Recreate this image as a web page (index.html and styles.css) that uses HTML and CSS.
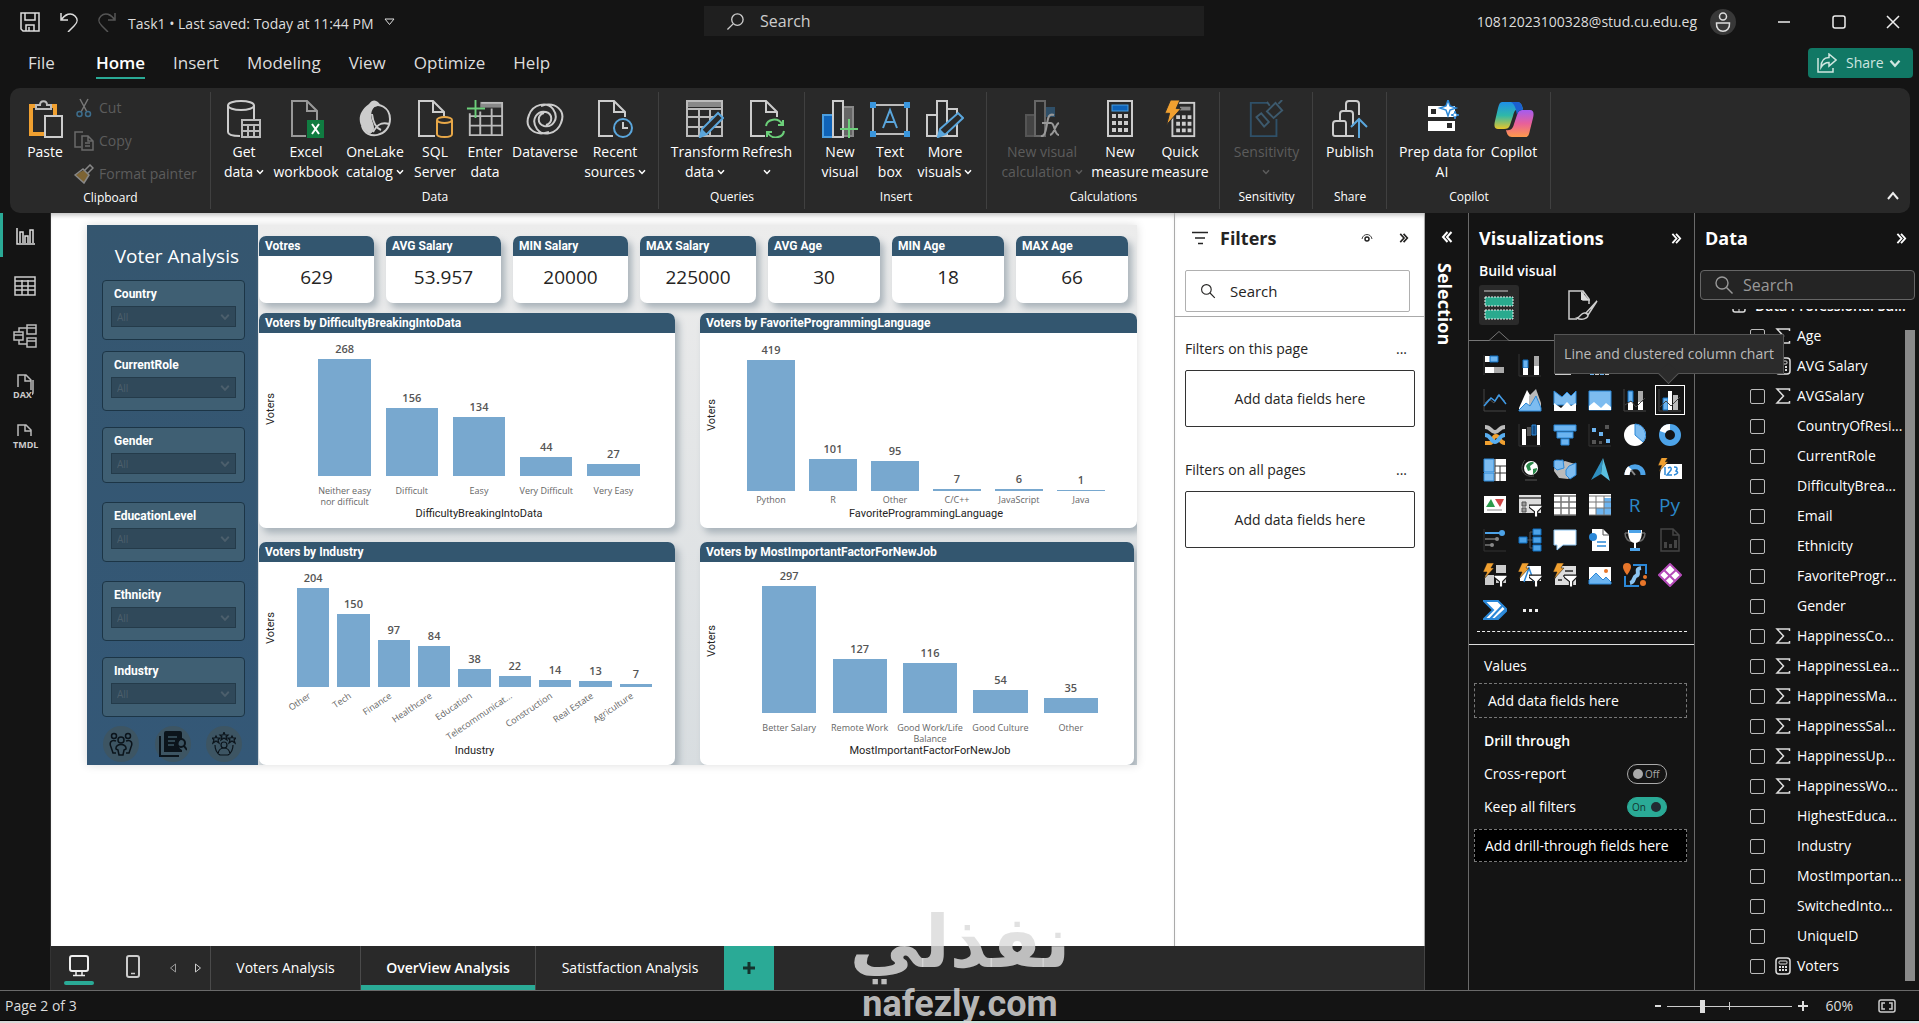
FILE: index.html
```html
<!DOCTYPE html>
<html lang="en">
<head>
<meta charset="utf-8">
<title>Task1 - Power BI Desktop</title>
<link rel="stylesheet" href="styles.css">
</head>
<body>
<svg class="defs" aria-hidden="true">
  <symbol id="chev" viewBox="0 0 8 6"><path d="M1 1.200 4 4.500 7 1.200" fill="none" stroke="currentColor" stroke-width="1.500"/></symbol>
  <symbol id="dbl" viewBox="0 0 12 12"><path d="M1.500 1 6 6l-4.500 5M5.500 1 10 6l-4.500 5" fill="none" stroke="currentColor" stroke-width="2"/></symbol>
  <symbol id="sum" viewBox="0 0 16 18"><path d="M14.500 4V2H2l6.500 7L2 16h12.500v-2" fill="none" stroke="#ddd" stroke-width="1.500"/></symbol>
  <symbol id="calc" viewBox="0 0 16 18"><rect x="1" y="1" width="14" height="16" rx="3" fill="none" stroke="#ddd" stroke-width="1.500"/><rect x="4" y="4" width="8" height="3" rx="1" fill="none" stroke="#ddd"/><path d="M4 10h2m1 0h2m1 0h2M4 13h2m1 0h2m1 0h2" stroke="#ddd" stroke-width="2"/></symbol>
  <symbol id="bolt" viewBox="0 0 12 16"><path d="M4 0h7L8 5h3L1 16l3-7H0z" fill="#f0a030" stroke="#141414" stroke-width=".5"/></symbol>
  <symbol id="funnel" viewBox="0 0 12 12"><path d="M0 1h12v2L8 7v5H5V7L0 3z" fill="#fff" stroke="#141414"/></symbol>
  <symbol id="lens" viewBox="0 0 20 20"><circle cx="8" cy="8" r="6" fill="none" stroke="currentColor" stroke-width="1.400"/><path d="m12.500 12.500 6 6" stroke="currentColor" stroke-width="1.400"/></symbol>
</svg>

<header class="titlebar">
  <div class="quick">
    <button class="icon-btn" aria-label="Save"><svg width="20" height="20" viewBox="0 0 20 20"><path d="M1 1h18v18H3l-2-2zM5 1v7h10V1M6 19v-6h8v6M9 15v4" fill="none" stroke="#ddd" stroke-width="1.500"/></svg></button>
    <button class="icon-btn" aria-label="Undo"><svg width="18" height="20" viewBox="0 0 18 20"><path d="M1 1v7h7M1 8C5 2 11 0 15 4s2 7-1 10l-6 6" fill="none" stroke="#ddd" stroke-width="1.500"/></svg></button>
    <button class="icon-btn" aria-label="Redo"><svg width="18" height="20" viewBox="0 0 18 20"><path d="M17 1v7h-7M17 8C13 2 7 0 3 4s-2 7 1 10l6 6" fill="none" stroke="#555" stroke-width="1.500"/></svg></button>
    <span class="doc">Task1 • Last saved: Today at 11:44 PM</span>
    <svg width="11" height="8" viewBox="0 0 11 8"><path d="M1 1h9L5.500 6.500z" fill="none" stroke="#ddd"/></svg>
  </div>
  <label class="top-search"><svg class="flip" width="19" height="19"><use href="#lens"/></svg><input type="text" placeholder="Search" aria-label="Search"></label>
  <div class="account">
    <span>10812023100328@stud.cu.edu.eg</span>
    <svg width="26" height="26" viewBox="0 0 26 26"><circle cx="13" cy="13" r="13" fill="#383838"/><circle cx="13" cy="7.500" r="3.500" fill="none" stroke="#ddd" stroke-width="1.500"/><path d="M6.500 14h13c1 11-14 11-13 0z" fill="none" stroke="#ddd" stroke-width="1.500"/></svg>
    <button class="win" aria-label="Minimize"><svg width="14" height="14" viewBox="0 0 14 14"><path d="M1 7h12" stroke="#eee" stroke-width="1.500"/></svg></button>
    <button class="win" aria-label="Maximize"><svg width="14" height="14" viewBox="0 0 14 14"><rect x="1" y="1" width="12" height="12" rx="2" fill="none" stroke="#eee" stroke-width="1.500"/></svg></button>
    <button class="win" aria-label="Close"><svg width="14" height="14" viewBox="0 0 14 14"><path d="m1 1 12 12M13 1 1 13" stroke="#eee" stroke-width="1.500"/></svg></button>
  </div>
</header>

<nav class="menu">
  <button class="m-file">File</button><button class="on">Home</button><button>Insert</button><button>Modeling</button><button>View</button><button>Optimize</button><button>Help</button>
  <button class="share"><svg width="20" height="20" viewBox="0 0 20 20"><path d="M1 5v14h15v-4M12 1l7 6-7 6V9.500c-4 0-6 1.500-8 5C4 8 7 4.500 12 4.500z" fill="none" stroke="#cfe6e0" stroke-width="1.500"/></svg>Share<svg width="12" height="9"><use href="#chev"/></svg></button>
</nav>

<section class="ribbon">
  <div class="group g-clip">
    <div class="cmds">
      <button class="cmd w-paste"><svg width="36" height="38" viewBox="0 0 36 38"><path d="M4 6h24v28H4z" fill="none" stroke="#f0a030" stroke-width="4"/><path d="M9 9V5h4c0-5 7-5 7 0h4v4z" fill="#2a2a2a" stroke="#bbb" stroke-width="2"/><path d="M18 16h17v21H18z" fill="#2a2a2a" stroke="#ccc" stroke-width="2"/></svg>Paste</button>
      <div class="small-cmds">
        <button><svg width="20" height="20" viewBox="0 0 20 20"><path d="M6 1l7 13M14 1 7 14" stroke="#777" stroke-width="1.500"/><circle cx="5.500" cy="16" r="2.500" fill="none" stroke="#3d6d8c" stroke-width="1.500"/><circle cx="14" cy="16" r="2.500" fill="none" stroke="#3d6d8c" stroke-width="1.500"/></svg>Cut</button>
        <button><svg width="20" height="20" viewBox="0 0 20 20"><path d="M7 16H1V1h8M8 5h6l5 5v9H8zM14 5v5h5M11 12h5M11 15h5" fill="none" stroke="#6a6a6a" stroke-width="1.500"/></svg>Copy</button>
        <button><svg width="20" height="20" viewBox="0 0 20 20"><path d="M1 11l9-5 5 5-5 8z" fill="#7d6434"/><path d="M1 11 9 5l6 6-5 8zM11 6l5-5 3 3-5 5" fill="none" stroke="#888" stroke-width="1.500"/></svg>Format painter</button>
      </div>
    </div>
    <span class="g-name">Clipboard</span>
  </div>
  <div class="group g-data">
    <div class="cmds">
      <button class="cmd w-a"><svg width="36" height="38" viewBox="0 0 36 38"><path d="M2 5v27c0 3 5 4 12 4M28 5v14" fill="none" stroke="#ccc" stroke-width="2"/><ellipse cx="15" cy="5.500" rx="13" ry="4.500" fill="none" stroke="#ccc" stroke-width="2"/><path d="M16 20h18v17H16zM16 25h18M16 31h18M22 25v12M28 25v12" fill="none" stroke="#bbb" stroke-width="2"/></svg>Get<span>data<svg class="ch"><use href="#chev"/></svg></span></button>
      <button class="cmd w-b"><svg width="36" height="38" viewBox="0 0 36 38"><path d="M18 36H4V1h15l10 10v9M19 1v10h10" fill="none" stroke="#999" stroke-width="2"/><rect x="19" y="20" width="17" height="18" fill="#107c41"/><path d="m24 24 7 10m0-10-7 10" stroke="#fff" stroke-width="2"/></svg>Excel<span>workbook</span></button>
      <button class="cmd w-c"><svg width="36" height="38" viewBox="0 0 36 38"><path d="M12 4c4-6 9-4 12 2-9-2-12 8-8 17 2 6 1 9-3 11C1 28-2 14 12 4z" fill="#ccc"/><path d="M14 8c8-7 19 0 19 11 0 18-24 22-28 7M15 14c1 8 4 14 9 16M16 32c5-9 10-10 16-8" fill="none" stroke="#ccc" stroke-width="2"/></svg>OneLake<span>catalog <svg class="ch"><use href="#chev"/></svg></span></button>
      <button class="cmd w-d"><svg width="36" height="38" viewBox="0 0 36 38"><path d="M18 36H2V1h14l11 11v4M16 1v11h11" fill="none" stroke="#ccc" stroke-width="2"/><path d="M20 20v14c0 4 15 4 15 0V20" fill="none" stroke="#e8a848" stroke-width="2"/><ellipse cx="27.500" cy="20" rx="7.500" ry="3" fill="#2a2a2a" stroke="#e8a848" stroke-width="2"/></svg>SQL<span>Server</span></button>
      <button class="cmd w-e"><svg width="38" height="40" viewBox="0 0 38 40"><path d="M14 5h23" stroke="#888" stroke-width="6"/><path d="M3 14v23h34V3H15M3 17h34M3 27h34M14 12v25M26 9v28" fill="none" stroke="#bbb" stroke-width="2"/><path d="M9 0v19M0 9h19" stroke="#6ccf7a" stroke-width="2"/></svg>Enter<span>data</span></button>
      <button class="cmd w-f"><svg width="38" height="38" viewBox="0 0 38 38"><path d="M23 32C8 37-2 27 3 15 7 4 21 1 27 9c7 10-1 19-9 17-7-2-7-11 0-13M15 6c15-5 25 5 20 17-4 11-18 14-24 6-7-10 1-19 9-17 7 2 7 11 0 13" fill="none" stroke="#ccc" stroke-width="2"/></svg>Dataverse</button>
      <button class="cmd w-g"><svg width="36" height="38" viewBox="0 0 36 38"><path d="M16 36H2V1h15l11 11v5M17 1v11h11" fill="none" stroke="#ccc" stroke-width="2"/><circle cx="26" cy="28" r="9" fill="#2a2a2a" stroke="#5aa6dc" stroke-width="2"/><path d="M26 22v6h5" fill="none" stroke="#ccc" stroke-width="2"/></svg>Recent<span>sources<svg class="ch"><use href="#chev"/></svg></span></button>
    </div>
    <span class="g-name">Data</span>
  </div>
  <div class="group g-query">
    <div class="cmds">
      <button class="cmd w-g"><svg width="38" height="38" viewBox="0 0 38 38"><path d="M1 4h35" stroke="#888" stroke-width="6"/><path d="M1 1h35v35H1zM1 9h35M1 17h35M1 27h35M13 9v27M24 9v27" fill="none" stroke="#bbb" stroke-width="2"/><path d="M14 37l2-8 16-16 5 5-16 16z" fill="#2a2a2a" stroke="#5aa6dc" stroke-width="2"/><path d="m14 37 2-8 5 5z" fill="#5aa6dc"/></svg>Transform<span>data <svg class="ch"><use href="#chev"/></svg></span></button>
      <button class="cmd w-e"><svg width="36" height="38" viewBox="0 0 36 38"><path d="M16 36H2V1h15l11 11v5M17 1v11h11" fill="none" stroke="#ccc" stroke-width="2"/><path d="M17 26c1-7 12-9 16-2M34 20v5h-5M35 31c-1 7-12 9-16 2M18 37v-5h5" fill="none" stroke="#6ccf7a" stroke-width="2"/></svg>Refresh<span><svg class="ch"><use href="#chev"/></svg></span></button>
    </div>
    <span class="g-name">Queries</span>
  </div>
  <div class="group g-insert">
    <div class="cmds">
      <button class="cmd w-d"><svg width="36" height="38" viewBox="0 0 36 38"><rect x="1" y="15" width="10" height="22" fill="#0f63b8" stroke="#4a9ee0" stroke-width="2"/><rect x="21" y="7" width="10" height="29" fill="#666" stroke="#888" stroke-width="2"/><rect x="11" y="1" width="10" height="36" fill="#2a2a2a" stroke="#ccc" stroke-width="2"/><path d="M27 19v19M18 29h18" stroke="#6ccf7a" stroke-width="2"/></svg>New<span>visual</span></button>
      <button class="cmd w-e"><svg width="40" height="38" viewBox="0 0 40 38"><rect x="3" y="5" width="34" height="29" fill="none" stroke="#bbb" stroke-width="2"/><path d="M0 2h6v6H0zM34 2h6v6h-6zM0 31h6v6H0zM34 31h6v6h-6z" fill="#3a96dd"/><path d="m13 28 7-18 7 18M15 22h10" fill="none" stroke="#5aa6dc" stroke-width="2"/></svg>Text<span>box</span></button>
      <button class="cmd w-h"><svg width="38" height="38" viewBox="0 0 38 38"><path d="M1 15h10v21H1zM11 1h10v35H11zM21 9h10v27H21z" fill="none" stroke="#ccc" stroke-width="2"/><path d="M12 37l2-8 18-16 5 5-17 16z" fill="#2a2a2a" stroke="#5aa6dc" stroke-width="2"/><path d="m12 37 2-8 5 5z" fill="#5aa6dc"/></svg>More<span>visuals <svg class="ch"><use href="#chev"/></svg></span></button>
    </div>
    <span class="g-name">Insert</span>
  </div>
  <div class="group g-calc">
    <div class="cmds">
      <button class="cmd w-i off" disabled><svg width="36" height="38" viewBox="0 0 36 38"><rect x="2" y="15" width="9" height="21" fill="#444" stroke="#555" stroke-width="2"/><rect x="21" y="7" width="10" height="10" fill="#2f4f68"/><path d="M11 1h10v35H11z" fill="#2a2a2a" stroke="#666" stroke-width="2"/><path d="M30 15c-6-2-6 4-7 9s-2 13-6 12M18 23h9M27 23c4 0 3 12 8 12M35 23c-4 1-4 11-9 12" fill="none" stroke="#999" stroke-width="2"/></svg>New visual<span>calculation<svg class="ch"><use href="#chev"/></svg></span></button>
      <button class="cmd w-g"><svg width="26" height="38" viewBox="0 0 26 38"><rect x="1" y="1" width="24" height="35" fill="none" stroke="#ccc" stroke-width="2"/><rect x="5" y="5" width="16" height="6" fill="#0f63b8" stroke="#4a9ee0"/><path d="M5 16h4m2 0h4m2 0h4M5 23h4m2 0h4m2 0h4M5 30h4m2 0h4m2 0h4" stroke="#ccc" stroke-width="4"/></svg>New<span>measure</span></button>
      <button class="cmd w-d"><svg width="32" height="40" viewBox="0 0 32 40"><rect x="8" y="3" width="23" height="35" fill="none" stroke="#ccc" stroke-width="2"/><path d="M16 9h11" stroke="#888" stroke-width="4"/><path d="M12 18h4m2 0h4m2 0h4M12 25h4m2 0h4m2 0h4M12 32h4m2 0h4m2 0h4" stroke="#ccc" stroke-width="4"/><path d="M6 0h10l-4 9h5L2 26l3-12H0z" fill="#f0a030" stroke="#2a2a2a"/></svg>Quick<span>measure</span></button>
    </div>
    <span class="g-name">Calculations</span>
  </div>
  <div class="group g-sens">
    <div class="cmds">
      <button class="cmd off" disabled><svg width="36" height="40" viewBox="0 0 36 40"><path d="M20 3H2v35h27V20" fill="none" stroke="#2f5068" stroke-width="2"/><path d="m8 18 5-4 8 9-5 5zM19 12l9-9 7 8-9 8zM22 6l-3-4M31 4l4-4" fill="none" stroke="#3d5a6e" stroke-width="2"/></svg>Sensitivity<span><svg class="ch"><use href="#chev"/></svg></span></button>
    </div>
    <span class="g-name">Sensitivity</span>
  </div>
  <div class="group g-share">
    <div class="cmds">
      <button class="cmd"><svg width="36" height="38" viewBox="0 0 36 38"><path d="M27 15V4c0-2-1-3-3-3h-7c-2 0-3 1-3 3v8M22 36H3c-1 0-2-1-2-2V24c0-2 1-3 3-3h8c2 0 2 1 2 3v12M8 20v-6c0-2 1-3 3-3h7c2 0 3 1 3 3v12" fill="none" stroke="#ccc" stroke-width="2"/><path d="M27 38V19M19 27l8-8 8 8" fill="none" stroke="#5aa6dc" stroke-width="2"/></svg>Publish</button>
    </div>
    <span class="g-name">Share</span>
  </div>
  <div class="group g-copilot">
    <div class="cmds">
      <button class="cmd w-j"><svg width="34" height="38" viewBox="0 0 34 38"><path d="M3 6h27v11H3zM3 21h27v10H3z" fill="#fff"/><path d="M6 9h5v5H6zM22 23h5v5h-5z" fill="#2a2a2a"/><path d="M23 0l2 6 6 2-6 2-2 6-2-6-6-2 6-2z" fill="#fff" stroke="#2b88d8" stroke-width="1.500"/><path d="m30 11 1 3 3 1-3 1-1 3-1-3-3-1 3-1z" fill="#fff" stroke="#2b88d8"/></svg>Prep data for<span>AI</span></button>
      <button class="cmd w-k"><svg width="40" height="38" viewBox="0 0 40 38"><defs><linearGradient id="cpa" x2="0" y2="1"><stop stop-color="#1e8fe8"/><stop offset=".5" stop-color="#2fb8a8"/><stop offset="1" stop-color="#e8c62a"/></linearGradient><linearGradient id="cpb" x2="0" y2="1"><stop stop-color="#a45cf0"/><stop offset=".5" stop-color="#e8609a"/><stop offset="1" stop-color="#ff9a4a"/></linearGradient></defs><path d="M8 2h15c4 0 5 3 6 7h-4c-4 0-5 3-6 7l-3 9c-1 3-3 4-6 4H4c-4 0-4-4-3-8L4 8c1-4 2-6 4-6z" fill="url(#cpa)"/><path d="M32 37H18c-4 0-5-3-6-7 5 1 7-2 8-6l3-9c1-4 3-5 6-5h7c4 0 4 4 3 8l-3 12c-1 5-2 7-4 7z" fill="url(#cpb)"/><path d="M17 2h6c4 0 5 3 6 8-3 0-5 1-6 5-1-4-1-10-6-13z" fill="#1b5fd0"/></svg>Copilot</button>
    </div>
    <span class="g-name">Copilot</span>
  </div>
  <button class="collapse" aria-label="Collapse ribbon"><svg width="12" height="9" viewBox="0 0 12 9"><path d="m1 8 5-6 5 6" fill="none" stroke="#eee" stroke-width="2"/></svg></button>
</section>

<main class="work">
  <nav class="rail">
    <button class="on" aria-label="Report view"><svg width="20" height="20" viewBox="0 0 20 20"><path d="M2 1v16h18M5 16V5h3v11M10 16V9h3v7M15 16V3h3v13" fill="none" stroke="#ddd" stroke-width="1.500"/></svg></button>
    <button aria-label="Table view"><svg width="22" height="22" viewBox="0 0 22 22"><path d="M1 2h20v18H1zM1 6h20M1 11h20M1 15h20M8 5v15M14 5v15" fill="none" stroke="#ccc" stroke-width="1.500"/></svg></button>
    <button aria-label="Model view"><svg width="24" height="24" viewBox="0 0 24 24"><path d="M1 8h9v8H1zM1 11h9M14 1h9v9h-9zM14 4h9M14 14h9v9h-9zM14 17h9M6 8V4h8M6 16v4h8" fill="none" stroke="#bbb" stroke-width="1.500"/></svg></button>
    <button class="word" aria-label="DAX query view"><svg width="18" height="24" viewBox="0 0 18 24"><path d="M2 13V1h8l5 5v10M9 1v6h6M17 6v12q0 3-3 3" fill="none" stroke="#bbb" stroke-width="1.500"/></svg><span>DAX</span></button>
    <button class="word" aria-label="TMDL view"><svg width="18" height="24" viewBox="0 0 18 24"><path d="M2 12V1h8l5 5v6M9 1v6h6" fill="none" stroke="#bbb" stroke-width="1.500"/></svg><span>TMDL</span></button>
  </nav>

  <div class="center">
    <div class="upper">
      <section class="canvas">
        <div class="page">
          <aside class="slicers">
            <h1>Voter Analysis</h1>
            <div class="slicer"><label for="s1">Country</label><div class="pick"><select id="s1"><option>All</option></select><svg width="10" height="8"><use href="#chev"/></svg></div></div>
            <div class="slicer"><label for="s2">CurrentRole</label><div class="pick"><select id="s2"><option>All</option></select><svg width="10" height="8"><use href="#chev"/></svg></div></div>
            <div class="slicer short"><label for="s3">Gender</label><div class="pick"><select id="s3"><option>All</option></select><svg width="10" height="8"><use href="#chev"/></svg></div></div>
            <div class="slicer"><label for="s4">EducationLevel</label><div class="pick"><select id="s4"><option>All</option></select><svg width="10" height="8"><use href="#chev"/></svg></div></div>
            <div class="slicer"><label for="s5">Ethnicity</label><div class="pick"><select id="s5"><option>All</option></select><svg width="10" height="8"><use href="#chev"/></svg></div></div>
            <div class="slicer"><label for="s6">Industry</label><div class="pick"><select id="s6"><option>All</option></select><svg width="10" height="8"><use href="#chev"/></svg></div></div>
            <div class="nav-dots">
              <button aria-label="Voters"><svg width="24" height="24" viewBox="0 0 24 24" fill="none" stroke="#0b141b" stroke-width="1.500"><circle cx="12" cy="8" r="3"/><circle cx="5" cy="4" r="2.500"/><circle cx="19" cy="4" r="2.500"/><path d="M7 17c-1-6 11-6 10 0l-2 1-1 5h-4l-1-5zM7 9C2 7 0 11 2 15l2 6h3M17 9c5-2 7 2 5 6l-2 6h-3"/></svg></button>
              <button aria-label="Overview"><svg width="28" height="26" viewBox="0 0 28 26"><path d="M5 2q0-2 2-2h14q2 0 2 2v6a6 6 0 0 0 0 11v2H5z" fill="#0b141b"/><path d="M1 5v20h19" fill="none" stroke="#0b141b" stroke-width="2"/><path d="M9 6h9M9 10h7M9 14h6" stroke="#3d5563" stroke-width="1.500"/><circle cx="22" cy="12" r="4" fill="none" stroke="#0b141b" stroke-width="2"/><path d="m25 15 3 4" stroke="#0b141b" stroke-width="2"/></svg></button>
              <button aria-label="Satisfaction"><svg width="24" height="24" viewBox="0 0 24 24" fill="none" stroke="#0b141b" stroke-width="1.200"><circle cx="12" cy="13" r="3"/><path d="M6 22c1-8 11-8 12 0M12 0l1 3h3l-2 2 1 3-3-2-3 2 1-3-2-2h3zM4 4l1 2h3L6 8l1 3-3-2-3 2 1-3-2-2h3zM20 4l1 2h3l-2 2 1 3-3-2-3 2 1-3-2-2h3zM3 13c0 5 2 8 5 10h8c3-2 5-5 5-10"/></svg></button>
            </div>
          </aside>
          <div class="visuals">
            <div class="kpis">
              <article class="card"><h2>Votres</h2><p>629</p></article>
              <article class="card"><h2>AVG Salary</h2><p>53.957</p></article>
              <article class="card"><h2>MIN Salary</h2><p>20000</p></article>
              <article class="card"><h2>MAX Salary</h2><p>225000</p></article>
              <article class="card"><h2>AVG Age</h2><p>30</p></article>
              <article class="card"><h2>MIN Age</h2><p>18</p></article>
              <article class="card"><h2>MAX Age</h2><p>66</p></article>
            </div>
            <div class="charts">
              <article class="card chart c-diff"><h2>Voters by DifficultyBreakingIntoData</h2>
                <div class="body"><span class="ytitle">Voters</span>
                  <div class="plot">
                    <div class="bars"><div><b>268</b><i style="height:117px"></i></div><div><b>156</b><i style="height:68px"></i></div><div><b>134</b><i style="height:59px"></i></div><div><b>44</b><i style="height:19px"></i></div><div><b>27</b><i style="height:12px"></i></div></div>
                    <div class="cats"><span>Neither easy<br>nor difficult</span><span>Difficult</span><span>Easy</span><span>Very Difficult</span><span>Very Easy</span></div>
                    <div class="xtitle">DifficultyBreakingIntoData</div>
                  </div>
                </div></article>
              <article class="card chart c-lang"><h2>Voters by FavoriteProgrammingLanguage</h2>
                <div class="body"><span class="ytitle">Voters</span>
                  <div class="plot">
                    <div class="bars"><div><b>419</b><i style="height:131px"></i></div><div><b>101</b><i style="height:32px"></i></div><div><b>95</b><i style="height:30px"></i></div><div><b>7</b><i style="height:2px"></i></div><div><b>6</b><i style="height:2px"></i></div><div><b>1</b><i style="height:1px"></i></div></div>
                    <div class="cats"><span>Python</span><span>R</span><span>Other</span><span>C/C++</span><span>JavaScript</span><span>Java</span></div>
                    <div class="xtitle">FavoriteProgrammingLanguage</div>
                  </div>
                </div></article>
              <article class="card chart c-ind"><h2>Voters by Industry</h2>
                <div class="body"><span class="ytitle">Voters</span>
                  <div class="plot">
                    <div class="bars"><div><b>204</b><i style="height:99px"></i></div><div><b>150</b><i style="height:73px"></i></div><div><b>97</b><i style="height:47px"></i></div><div><b>84</b><i style="height:41px"></i></div><div><b>38</b><i style="height:18px"></i></div><div><b>22</b><i style="height:11px"></i></div><div><b>14</b><i style="height:7px"></i></div><div><b>13</b><i style="height:6px"></i></div><div><b>7</b><i style="height:3px"></i></div></div>
                    <div class="cats slanted"><span><em>Other</em></span><span><em>Tech</em></span><span><em>Finance</em></span><span><em>Healthcare</em></span><span><em>Education</em></span><span><em>Telecommunicat...</em></span><span><em>Construction</em></span><span><em>Real Estate</em></span><span><em>Agriculture</em></span></div>
                    <div class="xtitle">Industry</div>
                  </div>
                </div></article>
              <article class="card chart c-job"><h2>Voters by MostImportantFactorForNewJob</h2>
                <div class="body"><span class="ytitle">Voters</span>
                  <div class="plot">
                    <div class="bars"><div><b>297</b><i style="height:127px"></i></div><div><b>127</b><i style="height:54px"></i></div><div><b>116</b><i style="height:50px"></i></div><div><b>54</b><i style="height:23px"></i></div><div><b>35</b><i style="height:15px"></i></div></div>
                    <div class="cats"><span>Better Salary</span><span>Remote Work</span><span>Good Work/Life<br>Balance</span><span>Good Culture</span><span>Other</span></div>
                    <div class="xtitle">MostImportantFactorForNewJob</div>
                  </div>
                </div></article>
            </div>
          </div>
        </div>
      </section>

      <aside class="filters">
        <div class="f-head">
          <div class="f-title"><svg width="16" height="14" viewBox="0 0 16 14"><path d="M0 1.500h16M3 7h10M6 12.500h5" stroke="#252525" stroke-width="1.500"/></svg><h2>Filters</h2>
            <button class="icon-btn" aria-label="Show filters"><svg width="12" height="10" viewBox="0 0 12 10"><path d="M1 6C2 0 10 0 11 6" fill="none" stroke="#444"/><circle cx="6" cy="6" r="2" fill="none" stroke="#222" stroke-width="1.500"/></svg></button>
            <button class="icon-btn" aria-label="Collapse"><svg width="10" height="10"><use href="#dbl"/></svg></button></div>
          <label class="f-search"><svg width="16" height="16"><use href="#lens"/></svg><input type="text" placeholder="Search" aria-label="Search filters"></label>
        </div>
        <div class="f-body">
          <div class="f-row"><span>Filters on this page</span><span>...</span></div>
          <div class="drop">Add data fields here</div>
          <div class="f-row"><span>Filters on all pages</span><span>...</span></div>
          <div class="drop">Add data fields here</div>
        </div>
      </aside>
    </div>
    <nav class="tabs">
      <button class="dev on" aria-label="Desktop layout"><svg width="20" height="22" viewBox="0 0 20 22"><rect x="1" y="1" width="18" height="15" rx="2" fill="none" stroke="#eee" stroke-width="2"/><path d="M7 16v4M13 16v4M4 20.500h12" stroke="#eee" stroke-width="1.500"/></svg></button>
      <button class="dev phone" aria-label="Mobile layout"><svg width="14" height="23" viewBox="0 0 14 23"><rect x="1" y="1" width="12" height="21" rx="2" fill="none" stroke="#ccc" stroke-width="2"/><path d="M5 18.500h4" stroke="#ccc" stroke-width="1.500"/></svg></button>
      <button class="arrow" aria-label="Previous page"><svg width="8" height="10" viewBox="0 0 8 10"><path d="M6.500 1v8L1.500 5z" fill="none" stroke="#999"/></svg></button>
      <button class="arrow" aria-label="Next page"><svg width="8" height="10" viewBox="0 0 8 10"><path d="M1.500 1v8l5-4z" fill="none" stroke="#ccc"/></svg></button>
      <button class="tab t1">Voters Analysis</button><button class="tab t2 on">OverView Analysis</button><button class="tab t3">Satistfaction Analysis</button><button class="add" aria-label="New page"><svg width="12" height="12" viewBox="0 0 12 12"><path d="M6 0v12M0 6h12" stroke="#14332d" stroke-width="3"/></svg></button>
    </nav>
  </div>

  <aside class="selection"><button class="icon-btn" aria-label="Expand"><svg class="flip" width="12" height="12"><use href="#dbl"/></svg></button><h2>Selection</h2></aside>

  <aside class="viz">
    <div class="p-head"><h2>Visualizations</h2><button class="icon-btn" aria-label="Collapse"><svg width="11" height="11"><use href="#dbl"/></svg></button></div>
    <h3>Build visual</h3>
    <div class="modes">
      <button class="on" aria-label="Build visual"><svg width="32" height="32" viewBox="0 0 32 32"><path d="M1 2h24" stroke="#999" stroke-width="1.500"/><rect x="2" y="8" width="28" height="9" fill="#2aaa8e" stroke="#eee" stroke-dasharray="2 1"/><rect x="2" y="21" width="28" height="9" fill="#2aaa8e" stroke="#eee" stroke-dasharray="2 1"/></svg></button>
      <button aria-label="Format visual"><svg width="32" height="32" viewBox="0 0 32 32"><path d="M10 30H2V2h14l6 8v5M16 2v9h7" fill="none" stroke="#ccc" stroke-width="1.500"/><path d="M14 2l8 9h-8z" fill="#ddd"/><path d="M30 12 19 24l2 2 9-14zM18 24c-4-1-4 4-8 5 5 3 12 0 11-4z" fill="none" stroke="#ccc" stroke-width="1.500"/></svg></button>
    </div>
    <div class="rule"><svg width="20" height="10" viewBox="0 0 20 10"><path d="M0 9.500 10 .5l10 9" fill="#141414" stroke="#777"/></svg></div>
    <div class="gallery">
      <button aria-label="Stacked bar chart"><svg viewBox="0 0 24 24"><path d="M1 2v20" stroke="#333"/><path d="M2 3h5v6H2zM2 14h9v6H2z" fill="#fff"/><path d="M7 3h8v6H7z" fill="#6cb4f0" stroke="#0f6cbd"/><path d="M11 14h10v6H11z" fill="#aaa"/></svg></button>
      <button aria-label="Stacked column chart"><svg viewBox="0 0 24 24"><path d="M1 1v22h22" fill="none" stroke="#333"/><path d="M5 7h5v8H5z" fill="#6cb4f0" stroke="#0f6cbd"/><path d="M5 15h5v7H5zM16 13h5v9h-5z" fill="#fff"/><path d="M16 3h5v10h-5z" fill="#aaa"/></svg></button>
      <button aria-label="Clustered bar chart"><svg viewBox="0 0 24 24"><path d="M2 3h10v5H2z" fill="#6cb4f0"/><path d="M2 8h6v5H2z" fill="#fff"/><path d="M2 17h16v5H2z" fill="#ccc"/></svg></button>
      <button aria-label="Clustered column chart"><svg viewBox="0 0 24 24"><path d="M2 12h4v10H2zM12 10h4v12h-4z" fill="#6cb4f0"/><path d="M7 8h4v14H7zM17 6h4v16h-4z" fill="#ccc"/></svg></button>
      <button aria-label="100% stacked bar chart"><svg viewBox="0 0 24 24"><path d="M2 3h8v6H2zM2 12h12v6H2z" fill="#fff"/><path d="M10 3h12v6H10z" fill="#6cb4f0"/></svg></button>
      <button aria-label="100% stacked column chart"><svg viewBox="0 0 24 24"><path d="M4 3h6v8H4z" fill="#6cb4f0"/><path d="M4 11h6v7H4zM15 9h6v9h-6z" fill="#fff"/></svg></button>
      <button aria-label="Line chart"><svg viewBox="0 0 24 24"><path d="M1 1v22h22" fill="none" stroke="#444"/><path d="m2 15 4-4 5 4 4-8 7 6" fill="none" stroke="#555"/><path d="m1 18 7-8 4 3 4-6 7 9" fill="none" stroke="#3f9be8" stroke-width="1.500"/></svg></button>
      <button aria-label="Area chart"><svg viewBox="0 0 24 24"><path d="m1 20 8-18 6 10v10H1z" fill="#fff"/><path d="m11 8 7-7 5 14v8H11z" fill="#bbb"/><path d="m1 22 7-7 4 3 6-10 5 12v3H1z" fill="#7dbcf0" stroke="#2b88d8"/></svg></button>
      <button aria-label="Stacked area chart"><svg viewBox="0 0 24 24"><path d="m1 3 8 6 5-5 4 4 5-5v14H1z" fill="#7dbcf0" stroke="#2b88d8"/><path d="m1 15 7 5 6-6 4 4 5-3v8H1z" fill="#fff"/></svg></button>
      <button aria-label="100% stacked area chart"><svg viewBox="0 0 24 24"><path d="M1 3h22v19H1z" fill="#7dbcf0" stroke="#2b88d8"/><path d="m1 18 5-4 7 6 5-5 5 4v3H1z" fill="#fff"/></svg></button>
      <button aria-label="Line and stacked column chart"><svg viewBox="0 0 24 24"><path d="M1 1v22h22" fill="none" stroke="#444"/><path d="M5 3h5v11H5z" fill="#6cb4f0" stroke="#0f6cbd"/><path d="M5 14h5v8H5zM15 14h5v8h-5z" fill="#fff"/><path d="M15 3h5v11h-5z" fill="#aaa"/><path d="m2 17 6-4 5 6 9-9" fill="none" stroke="#444"/></svg></button>
      <button class="picked" aria-label="Line and clustered column chart"><svg viewBox="0 0 24 24"><path d="M1 1v22h22" fill="none" stroke="#444"/><path d="M5 10h5v12H5z" fill="#6cb4f0" stroke="#0f6cbd"/><path d="M10 3h4v19h-4z" fill="#fff"/><path d="M15 7h5v15h-5z" fill="#bbb"/><path d="m2 19 6-6 5 5 9-9" fill="none" stroke="#444"/></svg></button>
      <button aria-label="Ribbon chart"><svg viewBox="0 0 24 24"><path d="M2 4c6 0 6 5 10 5s4-5 10-5" fill="none" stroke="#bbb" stroke-width="4"/><path d="M2 20h5c4 0 2-7 6-7s3 7 9 7" fill="none" stroke="#f0a030" stroke-width="4"/><path d="M2 12c6 0 6 7 10 7s4-7 10-7" fill="none" stroke="#58aef0" stroke-width="4"/></svg></button>
      <button aria-label="Waterfall chart"><svg viewBox="0 0 24 24"><path d="M1 1v22h22" fill="none" stroke="#333"/><path d="M4 6h4v16H4zM19 2h3v20h-3z" fill="#fff"/><path d="M9 4h4v9H9z" fill="#555"/><path d="M14 2h4v10h-4z" fill="#164a80" stroke="#2b88d8"/></svg></button>
      <button aria-label="Funnel chart"><svg viewBox="0 0 24 24"><path d="M1 2h22v6H1zM4 9h16v6H4zM8 16h8v6H8z" fill="#6cb4f0" stroke="#2b88d8"/></svg></button>
      <button aria-label="Scatter chart"><svg viewBox="0 0 24 24"><path d="M1 1v22h22" fill="none" stroke="#333"/><path d="M4 5h4v4H4zM11 9h4v4h-4zM18 16h4v4h-4z" fill="#6cb4f0"/><path d="M17 2h4v4h-4zM4 17h4v4H4zM11 18h3v3h-3z" fill="#555"/></svg></button>
      <button aria-label="Pie chart"><svg viewBox="0 0 24 24"><circle cx="12" cy="12" r="11" fill="#fff"/><path d="M12 12V1a11 11 0 0 1 8 18z" fill="#7dbcf0" stroke="#2b88d8"/></svg></button>
      <button aria-label="Donut chart"><svg viewBox="0 0 24 24"><circle cx="12" cy="12" r="8" fill="none" stroke="#4da3e8" stroke-width="6"/><path d="M4.500 9A8 8 0 0 1 12 4" fill="none" stroke="#fff" stroke-width="6"/></svg></button>
      <button aria-label="Treemap"><svg viewBox="0 0 24 24"><path d="M1 1h22v22H1z" fill="#fff"/><path d="M1 1h10v13H1zM1 15h10v8H1z" fill="#7dbcf0" stroke="#2b88d8"/><path d="M12 8h11M17 8v15M12 15h11M12 1v22" stroke="#333"/></svg></button>
      <button aria-label="Map"><svg viewBox="0 0 24 24"><circle cx="13" cy="10" r="7" fill="#fff"/><path d="M8 8c2-4 7-5 8-3l-4 3 1 4-3 1zM15 11l4-1c0 4-3 6-4 6z" fill="#2a8a4a"/><path d="M7 2c-7 9-1 18 9 16M7 22h12" fill="none" stroke="#555"/></svg></button>
      <button aria-label="Filled map"><svg viewBox="0 0 24 24"><path d="M2 4c4-3 6 1 10-1l10 3-1 10-6 5-9-1-5-7z" fill="#bbb"/><path d="M1 3c3-2 5 0 9-1l1 8-7 2-3-3zM13 12l3-4 7-3v12l-6 4-4-4z" fill="#7dbcf0" stroke="#2b88d8"/></svg></button>
      <button aria-label="Azure map"><svg viewBox="0 0 24 24"><path d="M15 0 3 22l10-6z" fill="#2f8fc0"/><path d="m15 0 7 23-9-7z" fill="#5ac0e0"/></svg></button>
      <button aria-label="Gauge"><svg viewBox="0 0 24 24"><path d="M4 17c0-11 16-11 16 0" fill="none" stroke="#4da3e8" stroke-width="5"/><path d="M4 17c0-3 1-5 3-7" fill="none" stroke="#fff" stroke-width="5"/><path d="m12 17-4-5" stroke="#888" stroke-width="2"/></svg></button>
      <button aria-label="Card"><svg viewBox="0 0 24 24"><path d="M4 6h20v15H2v-5z" fill="#fff"/><path d="M7 9v8M10 10q4-2 3 2l-4 5h5M16 9q5 0 2 4 4 2-2 4" fill="none" stroke="#2b88d8" stroke-width="1.500"/><use href="#bolt" x="0" y="-1" width="11" height="15"/></svg></button>
      <button aria-label="KPI"><svg viewBox="0 0 24 24"><path d="M1 3h22v17H1z" fill="#fff"/><path d="m8 6 4 8H3z" fill="#2a9a4a"/><path d="M12 6h9l-4 8z" fill="#d04545"/><path d="M4 17h15" stroke="#888"/></svg></button>
      <button aria-label="Slicer"><svg viewBox="0 0 24 24"><path d="M1 2h22v18H1z" fill="#ddd"/><path d="M1 5h22" stroke="#666" stroke-width="2"/><path d="M4 9h4v4H4zM4 15h4v4H4z" fill="#999" stroke="#555"/><use href="#funnel" x="11" y="11" width="13" height="13"/></svg></button>
      <button aria-label="Table"><svg viewBox="0 0 24 24"><path d="M1 1h22v21H1z" fill="#fff"/><path d="M1 3h22M1 9h22M1 15h22M8 3v19M16 3v19M1 22h22" stroke="#777" stroke-width="1.500"/></svg></button>
      <button aria-label="Matrix"><svg viewBox="0 0 24 24"><path d="M1 1h22v21H1z" fill="#fff"/><path d="M16 5h7v17H8v-7h8z" fill="#6cb4f0"/><path d="M1 3h22M1 9h22M1 15h22M8 3v19M16 3v19M1 22h22" stroke="#777"/></svg></button>
      <button class="glyph" aria-label="R script visual">R</button>
      <button class="glyph" aria-label="Python visual">Py</button>
      <button aria-label="Key influencers"><svg viewBox="0 0 24 24"><path d="M1 1v22h22" fill="none" stroke="#333"/><path d="M2 5h16" stroke="#4da3e8" stroke-width="2"/><circle cx="19" cy="5" r="3" fill="#4da3e8"/><path d="M2 11h11M2 17h6" stroke="#777" stroke-width="1.500"/><circle cx="14" cy="11" r="2" fill="#888"/><circle cx="9" cy="17" r="2" fill="#888"/></svg></button>
      <button aria-label="Decomposition tree"><svg viewBox="0 0 24 24"><path d="M8 12h7M12 4v16M12 4h3M12 20h3" fill="none" stroke="#555"/><path d="M1 9h8v6H1zM15 1h8v6h-8zM15 9h8v6h-8zM15 17h8v6h-8z" fill="#4da3e8" stroke="#0f6cbd"/></svg></button>
      <button aria-label="Q&amp;A"><svg viewBox="0 0 24 24"><path d="M1 2h22v15H10l-6 5v-5H1z" fill="#fff" stroke="#8cc4f0"/></svg></button>
      <button aria-label="Narrative"><svg viewBox="0 0 24 24"><path d="M4 1h11l6 6v16H4z" fill="#fff"/><path d="M15 1v6h6" fill="none" stroke="#555"/><circle cx="5" cy="9" r="4" fill="#2b88d8"/><path d="M9 14h9M9 18h9" stroke="#2b88d8" stroke-width="1.500"/></svg></button>
      <button aria-label="Metrics"><svg viewBox="0 0 24 24"><path d="M2 5c0 6 4 9 7 8M22 5c0 6-4 9-7 8M2 5h3M19 5h3" fill="none" stroke="#666" stroke-width="1.500"/><path d="M5 2h14c0 8-2 13-7 13S5 10 5 2z" fill="#fff"/><path d="M6 2h12v3H6zM7 20h10v3H7z" fill="#4da3e8"/><path d="M11 14h2v6h-2z" fill="#fff"/></svg></button>
      <button aria-label="Paginated report"><svg viewBox="0 0 24 24"><path d="M3 1h12l6 6v16H3zM15 1v6h6" fill="none" stroke="#444" stroke-width="1.500"/><path d="M6 14h3v6H6zM11 16h3v4h-3zM16 12h3v8h-3z" fill="#444"/></svg></button>
      <button aria-label="Button slicer"><svg viewBox="0 0 24 24"><path d="M2 12h9v10H2zM13 2h10v8H13zM13 12h10v8H13z" fill="#ccc"/><use href="#bolt" width="12" height="16"/><use href="#funnel" x="11" y="11" width="13" height="13"/></svg></button>
      <button aria-label="Text slicer"><svg viewBox="0 0 24 24"><path d="M8 3h15v15H2v-4z" fill="#fff"/><path d="m6 19 5-14 5 14" fill="none" stroke="#2b88d8" stroke-width="1.500"/><use href="#bolt" width="12" height="16"/><use href="#funnel" x="11" y="11" width="13" height="13"/></svg></button>
      <button aria-label="List slicer"><svg viewBox="0 0 24 24"><path d="M8 3h15v19H2v-6z" fill="#ddd"/><path d="M12 8h8M10 13h9M5 17h4" stroke="#555" stroke-width="2"/><use href="#bolt" width="12" height="16"/><use href="#funnel" x="11" y="11" width="13" height="13"/></svg></button>
      <button aria-label="Image"><svg viewBox="0 0 24 24"><path d="M1 4h22v17H1z" fill="#fff"/><path d="m1 17 7-7 7 7 3-3 5 5v2H1z" fill="#6cb4f0" stroke="#2b88d8"/><circle cx="18" cy="8" r="2" fill="#e8762a"/></svg></button>
      <button aria-label="Route map"><svg viewBox="0 0 24 24"><path d="M10 2h13v9M2 13v10h14" fill="none" stroke="#2b88d8" stroke-width="2"/><path d="M18 5c-7 1 0 6-5 8-3 1-1 6-6 7" fill="none" stroke="#8cc4f0" stroke-width="4"/><path d="M0 4a4 4 0 0 1 8 0c0 3-4 8-4 8S0 7 0 4z" fill="#e8762a"/><circle cx="20" cy="20" r="3" fill="#e8762a"/><circle cx="22" cy="14" r="2" fill="#e8762a"/></svg></button>
      <button aria-label="Power Apps"><svg viewBox="0 0 24 24"><path d="M12 1 23 12 12 23 1 12z" fill="#fff" stroke="#b44ab8" stroke-width="2"/><path d="m6 7 11 11M18 7 6 18" stroke="#b44ab8" stroke-width="2"/></svg></button>
      <button aria-label="Power Automate"><svg viewBox="0 0 24 24"><path d="M1 3h14l9 9-9 9H1l9-9z" fill="#fff" stroke="#2b88d8" stroke-width="2"/><path d="M7 21 20 7M12 21 23 11" stroke="#2b88d8" stroke-width="2"/></svg></button>
      <button aria-label="More visuals"><svg viewBox="0 0 24 24"><path d="M5 11h3v3H5zM11 11h3v3h-3zM17 11h3v3h-3z" fill="#eee"/></svg></button>
      <div class="tip" role="tooltip">Line and clustered column chart</div>
    </div>
    <div class="wells">
      <span class="w-label">Values</span>
      <div class="well">Add data fields here</div>
      <h3>Drill through</h3>
      <label class="w-row"><span>Cross-report</span><span class="toggle"><input type="checkbox" role="switch"><span>Off</span></span></label>
      <label class="w-row"><span>Keep all filters</span><span class="toggle on"><input type="checkbox" role="switch" checked><span>On</span></span></label>
      <div class="well dark">Add drill-through fields here</div>
    </div>
  </aside>

  <aside class="data">
    <div class="p-head"><h2>Data</h2><button class="icon-btn" aria-label="Collapse"><svg width="11" height="11"><use href="#dbl"/></svg></button></div>
    <label class="d-search"><svg width="20" height="20"><use href="#lens"/></svg><input type="text" placeholder="Search" aria-label="Search data"></label>
    <div class="d-scroll">
      <div class="fields">
        <div class="table-name"><svg width="14" height="14" viewBox="0 0 14 14"><rect x="1" y="1" width="12" height="12" rx="2" fill="none" stroke="#ddd" stroke-width="1.500"/><path d="M1 6h12M7 6v7" stroke="#ddd"/></svg>Data Professional Su...</div>
        <label><input type="checkbox"><svg><use href="#sum"/></svg>Age</label>
        <label><input type="checkbox"><svg><use href="#calc"/></svg>AVG Salary</label>
        <label><input type="checkbox"><svg><use href="#sum"/></svg>AVGSalary</label>
        <label><input type="checkbox"><svg></svg>CountryOfResi...</label>
        <label><input type="checkbox"><svg></svg>CurrentRole</label>
        <label><input type="checkbox"><svg></svg>DifficultyBrea...</label>
        <label><input type="checkbox"><svg></svg>Email</label>
        <label><input type="checkbox"><svg></svg>Ethnicity</label>
        <label><input type="checkbox"><svg></svg>FavoriteProgr...</label>
        <label><input type="checkbox"><svg></svg>Gender</label>
        <label><input type="checkbox"><svg><use href="#sum"/></svg>HappinessCo...</label>
        <label><input type="checkbox"><svg><use href="#sum"/></svg>HappinessLea...</label>
        <label><input type="checkbox"><svg><use href="#sum"/></svg>HappinessMa...</label>
        <label><input type="checkbox"><svg><use href="#sum"/></svg>HappinessSal...</label>
        <label><input type="checkbox"><svg><use href="#sum"/></svg>HappinessUp...</label>
        <label><input type="checkbox"><svg><use href="#sum"/></svg>HappinessWo...</label>
        <label><input type="checkbox"><svg></svg>HighestEduca...</label>
        <label><input type="checkbox"><svg></svg>Industry</label>
        <label><input type="checkbox"><svg></svg>MostImportan...</label>
        <label><input type="checkbox"><svg></svg>SwitchedInto...</label>
        <label><input type="checkbox"><svg></svg>UniqueID</label>
        <label><input type="checkbox"><svg><use href="#calc"/></svg>Voters</label>
      </div>
      <div class="bar"></div>
    </div>
  </aside>
</main>

<footer class="status">
  <span>Page 2 of 3</span>
  <div class="zoom"><button aria-label="Zoom out"><svg width="8" height="12" viewBox="0 0 8 12"><path d="M1 6h6" stroke="#ddd" stroke-width="2"/></svg></button><input type="range" min="0" max="100" value="27" aria-label="Zoom"><button aria-label="Zoom in"><svg width="12" height="12" viewBox="0 0 12 12"><path d="M6 1v10M1 6h10" stroke="#ddd" stroke-width="2"/></svg></button><span class="pct">60%</span><button aria-label="Fit to page"><svg width="18" height="14" viewBox="0 0 18 14"><rect x="1" y="1" width="16" height="12" rx="2" fill="none" stroke="#ccc" stroke-width="1.500"/><path d="M7 4H4v6h3M11 4h3v6h-3" fill="none" stroke="#ccc" stroke-width="1.500"/></svg></button></div>
</footer>
<div class="strip"></div>
<div class="mark"><span lang="ar">نفذلي</span><span>nafezly.com</span></div>
</body>
</html>
```
FILE: styles.css
```css
:root {
  --bg: #141414;
  --panel: #292929;
  --teal: #2aaa96;
  --navy: #33566f;
  --bar: #78a8cf;
  --ui: "Open Sans", "Noto Sans", sans-serif;
  --din: Roboto, "Liberation Sans", sans-serif;
}
* { box-sizing: border-box; }
body {
  margin: 0; height: 100vh; overflow: hidden; position: relative;
  display: grid; grid-template-rows: 44px 44px 125px minmax(0, 1fr) 29px 3px;
  grid-template-columns: minmax(0, 1fr);
  background: var(--bg); color: #fff; font: 14px/20px var(--ui);
}
.defs { display: none; }
button { background: none; border: 0; padding: 0; margin: 0; color: inherit; font: inherit; }
input, select { font: inherit; color: inherit; margin: 0; }
h1, h2, h3, p { margin: 0; }
svg { flex: none; display: block; }
.flip { transform: scaleX(-1); }

/* title bar */
.titlebar { display: grid; grid-template-columns: 704px minmax(0, 500px) minmax(0, 1fr); align-items: center; }
.quick { display: flex; align-items: center; padding-left: 20px; gap: 20px; color: #ddd; }
.quick .doc { margin: 4px -10px 0 -8px; line-height: 40px; }
.top-search { display: flex; align-items: center; gap: 15px; height: 30px; padding: 0 22px; margin-bottom: 2px; background: #1f1f1f; color: #ccc; font-size: 16px; }
.top-search input, .f-search input, .d-search input { background: none; border: 0; outline: 0; padding: 0; width: 100%; min-width: 0; }
::placeholder { color: inherit; opacity: 1; }
.account { display: flex; justify-content: flex-end; align-items: center; color: #ddd; }
.account > svg { margin: 0 20px 0 13px; }
.win { width: 55px; height: 40px; display: grid; place-items: center; }
.win:last-child { width: 53px; }

/* menu */
.menu { display: flex; align-items: center; padding: 0 6px 6px 28px; gap: 28px; font-size: 17px; color: #ddd; }
.menu button { position: relative; line-height: 30px; }
.menu .m-file { margin-right: 13px; }
.menu .on { color: #fff; font-weight: 600; }
.menu .on::after { content: ""; position: absolute; left: 0; right: 0; bottom: -1px; height: 2px; background: var(--teal); }
.menu .share { margin-left: auto; display: flex; align-items: center; gap: 9px; width: 105px; height: 30px; padding: 0 9px; border-radius: 4px; background: #117865; color: #cfe6e0; font-size: 14px; }
.share svg:last-child { margin-left: -4px; }

/* ribbon */
.ribbon { display: flex; margin: 0 9px 0 10px; background: var(--panel); border-radius: 10px; position: relative; }
.group { display: flex; flex-direction: column; padding: 12px 0 8px; background: linear-gradient(#404040, #404040) right 4px / 1px 117px no-repeat; }
.group:first-child { padding-left: 9px; }
.g-clip { width: 201px; } .g-data { width: 448px; padding-left: 4px; } .g-query { width: 146px; padding-left: 10px; }
.g-insert { width: 182px; padding-left: 11px; } .g-calc { width: 233px; padding-left: 13px; } .g-sens { width: 93px; }
.g-share { width: 74px; } .g-copilot { width: 164px; padding-left: 9px; }
.cmds { display: flex; flex: 1; justify-content: flex-start; }
.g-sens .cmds, .g-share .cmds { justify-content: center; }
.g-name { text-align: center; font-size: 12px; line-height: 16px; }
.g-data .g-name { margin-left: -4px; } .g-clip .g-name, .g-copilot .g-name { margin-left: -9px; }
.g-query .g-name { margin-left: -10px; } .g-insert .g-name { margin-left: -11px; } .g-calc .g-name { margin-left: -13px; }
.cmd { display: flex; flex-direction: column; align-items: center; white-space: nowrap; font-size: 14px; line-height: 20px; }
.cmd > svg { height: 38px; margin-bottom: 4px; }
.cmd > span { display: flex; align-items: center; gap: 3px; height: 20px; }
.ch { width: 8px; height: 6px; }
.w-paste { width: 52px; } .w-a { width: 58px; } .w-b { width: 66px; } .w-c { width: 72px; } .w-d { width: 48px; }
.w-e { width: 52px; } .w-f { width: 68px; } .w-g { width: 72px; } .w-h { width: 58px; } .w-i { width: 84px; } .w-j { width: 92px; } .w-k { width: 52px; }
.off { color: #5c5c5c; }
.small-cmds { display: flex; flex-direction: column; margin: -9px 0 0 3px; color: #5c5c5c; }
.small-cmds button { display: flex; align-items: center; gap: 5px; height: 33px; white-space: nowrap; }
.collapse { margin: auto 11px 13px auto; }

/* work area */
.work { display: grid; grid-template-columns: 51px minmax(0, 1fr) 43px 226px 225px; border-bottom: 1px solid #6a6a6a; }
.rail { display: flex; flex-direction: column; border-right: 1px solid #333; }
.rail button { height: 50px; display: grid; place-items: center; position: relative; }
.rail button.on { height: 48px; }
.rail .on::before { content: ""; position: absolute; left: 0; top: 0; width: 3px; height: 44px; background: var(--teal); }
.rail .word span { position: absolute; left: 13px; bottom: 12px; font: 700 9px/9px var(--ui); color: #ccc; background: var(--bg); }
.center { display: grid; grid-template-rows: minmax(0, 1fr) 44px; min-width: 0; min-height: 0; }
.upper { display: grid; grid-template-columns: minmax(0, 1fr) 251px; min-height: 0; }
.canvas { background: #fff; padding: 12px 37px 0 36px; color: #252423; box-shadow: inset 0 5px 5px -3px #bbb; }
.page { display: grid; grid-template-columns: 171px minmax(0, 1fr); height: 540px; background: linear-gradient(#ececec, #d8dde0); box-shadow: 0 0 9px #ddd; overflow: hidden; }

/* slicers */
.slicers { background: linear-gradient(#35566f, #345877); padding: 19px 13px 0 15px; display: flex; flex-direction: column; color: #fff; }
.slicers h1 { font: 400 19px/24px var(--ui); text-align: right; padding-right: 6px; margin-bottom: 12px; }
.slicer { height: 60px; padding: 5px 8px; border: 1px solid #1c3546; border-radius: 4px; background: #3f5f73; margin-bottom: 11px; }
.slicer:nth-of-type(2), .slicer:nth-of-type(5) { margin-bottom: 16px; }
.slicer:nth-of-type(3), .slicer:nth-of-type(4) { margin-bottom: 19px; }
.slicer.short { height: 56px; }
.slicer label { display: block; padding-left: 3px; font: 700 12px/17px var(--din); }
.pick { display: flex; align-items: center; height: 21px; margin-top: 3px; padding: 0 5px; background: #30495a; border: 1px solid #243b4a; color: #4c5f6c; }
.pick select { flex: 1; appearance: none; border: 0; background: none; padding: 0; outline: 0; font-size: 10px; }
.nav-dots { display: flex; justify-content: space-between; padding: 0 3px 0 1px; margin-top: -2px; }
.nav-dots button { width: 36px; height: 36px; border-radius: 50%; background: #3d5563; display: grid; place-items: center; }

/* report cards */
.visuals { padding: 11px 0 0 1px; min-width: 0; }
.kpis { display: grid; grid-template-columns: 115fr 115fr 115fr 116fr 112fr 112fr 112fr; gap: 12px; padding-right: 9px; height: 67px; margin-bottom: 10px; }
.card { background: #fff; border-radius: 7px; box-shadow: 4px 5px 7px #a9b3ba; overflow: hidden; }
.card h2 { background: var(--navy); color: #fff; font: 700 12px/20px var(--din); height: 20px; padding-left: 6px; white-space: nowrap; }
.card p { text-align: center; font: 500 19px/42px var(--ui); }
.charts { display: grid; grid-template-columns: 416fr 437fr; grid-template-rows: 215px 223px; gap: 14px 25px; }
.c-job { margin-right: 3px; }
.body { display: grid; grid-template-columns: 24px minmax(0, 1fr); }
.ytitle { writing-mode: vertical-rl; transform: rotate(180deg); justify-self: center; font: 400 11px/12px var(--din); text-align: center; }
.plot { display: grid; grid-template-rows: var(--h) var(--l) 12px; grid-template-columns: minmax(0, 1fr); }
.bars { display: flex; }
.bars div { flex: 1; display: flex; flex-direction: column; justify-content: flex-end; align-items: center; min-width: 0; }
.bars b { font: 600 11px/12px var(--ui); color: #555; margin-bottom: 4px; }
.bars i { width: var(--w); background: var(--bar); }
.cats { display: flex; font-size: 9px; line-height: 11px; color: #666; white-space: nowrap; }
.cats span { flex: 1; min-width: 0; display: flex; justify-content: center; text-align: center; }
.slanted span { justify-content: flex-end; align-items: flex-start; padding-right: 24px; }
.slanted em { font-style: normal; transform: rotate(-34deg); transform-origin: 100% 50%; }
.xtitle { text-align: center; font: 400 11px/12px var(--din); }
.c-diff { --h: 143px; --l: 32px; --w: 78%; } .c-diff .plot { margin: 0 28px; } .c-diff .cats { padding-top: 9px; }
.c-lang { --h: 158px; --l: 17px; --w: 78%; } .c-lang .plot { margin: 0 25px 0 16px; } .c-lang .cats { padding-top: 3px; }
.c-ind { --h: 125px; --l: 58px; --w: 80%; } .c-ind .plot { margin: 0 19px 0 10px; } .c-ind .cats { padding-top: 2px; }
.c-job { --h: 151px; --l: 32px; --w: 77%; } .c-job .plot { margin: 0 28px 0 30px; } .c-job .cats { padding-top: 9px; }
.c-diff .ytitle { height: 152px; } .c-lang .ytitle { height: 164px; } .c-ind .ytitle { height: 132px; } .c-job .ytitle { height: 158px; }

/* filters */
.filters { background: #fff; color: #252423; border-left: 1px solid #aaa; border-right: 1px solid #aaa; box-shadow: inset 0 5px 5px -3px #bbb; }
.f-head { padding: 13px 14px 4px 10px; border-bottom: 1px solid #aaa; }
.f-title { display: flex; align-items: center; height: 24px; padding: 0 1px 0 7px; }
.f-title h2 { font: 700 18px/24px var(--ui); margin: 0 auto 0 12px; }
.f-title button + button { margin-left: 26px; }
.f-search { display: flex; align-items: center; gap: 14px; margin-top: 20px; height: 42px; border: 1px solid #b0b0b0; border-radius: 2px; padding: 0 14px; font-size: 15px; }
.f-body { padding: 22px 9px 0 10px; }
.f-row { display: flex; justify-content: space-between; padding-right: 8px; }
.drop { height: 57px; margin: 11px 0 33px; border: 1px solid #333; border-radius: 2px; display: grid; place-items: center; }

/* page tabs */
.tabs { display: flex; background: var(--panel); border-right: 1px solid #444; }
.tabs button { position: relative; display: grid; place-items: center; white-space: nowrap; }
.tabs .dev { width: 55px; padding-bottom: 4px; }
.dev.on::after { content: ""; position: absolute; left: 13px; width: 30px; bottom: 5px; height: 4px; border-radius: 2px; background: var(--teal); }
.tabs .phone { width: 54px; }
.arrow { width: 25px; }
.tabs .tab { border-left: 1px solid #4a4a4a; }
.t1 { width: 150px; } .t2 { width: 175px; } .t3 { width: 189px; }
.tab.on { font-weight: 600; }
.tab.on::after { content: ""; position: absolute; inset: auto 0 0 0; height: 5px; background: var(--teal); }
.tabs .add { width: 50px; background: var(--teal); }

/* side panes */
.selection { display: flex; flex-direction: column; align-items: center; padding-top: 18px; gap: 20px; }
.selection h2 { writing-mode: vertical-rl; font: 700 18px/24px var(--ui); margin-right: 4px; }
.viz, .data { border-left: 1px solid #6a6a6a; min-width: 0; min-height: 0; }
.p-head { display: flex; justify-content: space-between; align-items: center; height: 24px; margin-top: 13px; padding: 0 12px 0 10px; }
.p-head h2 { font: 700 18px/24px var(--ui); }
.viz h3 { font: 600 14px/20px var(--ui); }
.viz > h3 { margin: 11px 0 0 10px; }
.modes { display: flex; gap: 44px; margin: 4px 0 0 10px; }
.modes button { width: 40px; height: 40px; display: grid; place-items: center; border-radius: 3px; }
.modes .on { background: #2a2a2a; }
.rule { height: 16px; border-bottom: 1px solid #777; padding: 6px 0 0 20px; }
.gallery { position: relative; display: grid; grid-template-columns: repeat(6, 35px); grid-auto-rows: 35px; margin: 6px 7px 0 8px; padding-bottom: 4px; border-bottom: 1px dashed #eee; width: 210px; }
.gallery button { display: grid; place-items: center; }
.gallery svg { width: 24px; height: 24px; }
.gallery .picked { width: 30px; height: 30px; place-self: center; border: 1px solid #fff; }
.glyph { color: #2b88c8; font-size: 19px; line-height: 24px; }
.tip { position: absolute; left: 77px; top: -13px; width: 230px; height: 40px; border: 1px solid #555; background: #2b2b2b; color: #bbb; text-align: center; line-height: 38px; white-space: nowrap; z-index: 2; }
.tip::after { content: ""; position: absolute; left: 106px; bottom: -8px; width: 14px; height: 14px; background: #2b2b2b; border: solid #555; border-width: 0 1px 1px 0; transform: rotate(45deg); }
.wells { border-top: 1px solid #ddd; margin-top: 12px; padding: 11px 7px 0 5px; }
.w-label, .wells h3, .w-row > span:first-child { padding-left: 10px; display: block; }
.well { border: 1px dashed #777; height: 35px; line-height: 33px; padding-left: 13px; margin: 7px 0 13px; white-space: nowrap; }
.well.dark { background: #000; height: 33px; line-height: 31px; padding-left: 10px; margin: 6px 0 0; }
.w-row { display: flex; justify-content: space-between; align-items: center; height: 33px; padding-right: 20px; }
.wells h3 { margin-bottom: 6px; }
.toggle { position: relative; width: 40px; height: 20px; display: grid; align-items: center; border: 1px solid #aaa; border-radius: 10px; font-size: 10px; color: #aaa; padding-left: 17px; line-height: 18px; }
.toggle input { position: absolute; left: 5px; top: 4px; width: 10px; height: 10px; appearance: none; border-radius: 50%; background: #aaa; }
.toggle.on { background: var(--teal); border-color: var(--teal); color: #14332d; padding-left: 4px; }
.toggle.on input { left: 23px; background: #222b33; }

.data { display: flex; flex-direction: column; }
.data .p-head { flex: none; }
.d-search { display: flex; align-items: center; gap: 9px; flex: none; margin: 20px 4px 0 5px; height: 30px; border: 1px solid #666; border-radius: 4px; background: #242424; padding: 0 13px; color: #999; font-size: 16px; }
.d-scroll { flex: 1; min-height: 0; margin-top: 9px; display: grid; grid-template-columns: minmax(0, 1fr) 10px; padding-right: 4px; overflow: hidden; }
.fields { margin-top: -18px; }
.fields label, .table-name { display: flex; align-items: center; height: 30px; padding-left: 55px; white-space: nowrap; }
.table-name { padding-left: 37px; gap: 9px; font-weight: 600; }
.fields input { appearance: none; width: 15px; height: 15px; border: 1px solid #bbb; border-radius: 2px; flex: none; }
.fields label svg { width: 16px; height: 18px; margin: 0 6px 0 10px; }
.d-scroll .bar { background: #8a8a8a; margin: 21px 0 9px; }

/* status */
.status { display: flex; justify-content: space-between; align-items: center; padding: 1px 23px 0 5px; color: #ddd; }
.zoom { display: flex; align-items: center; }
.zoom input { width: 125px; height: 14px; margin: 0 5px; appearance: none; background: linear-gradient(#ccc, #ccc) 62px 3px / 1px 8px no-repeat, linear-gradient(#ccc, #ccc) 0 7px / 100% 1px no-repeat; }
.zoom input::-webkit-slider-thumb { appearance: none; width: 5px; height: 13px; background: #ddd; }
.pct { margin: 0 25px 0 16px; }
.strip { background: linear-gradient(90deg, #d8d8d8, #e8d8dc 30%, #c8e0d8 52%, #e8c8cc 65%, #d8e0e4); border-top: 1px solid #000; }

/* watermark over the page */
.mark { position: absolute; left: 852px; bottom: 1px; width: 216px; display: flex; flex-direction: column; align-items: center; color: rgba(219, 219, 219, .84); font: 700 36px/36px Roboto, sans-serif; pointer-events: none; }
.mark span:first-child { font: 700 72px/76px "DejaVu Sans", sans-serif; margin-bottom: 6px; }
```
